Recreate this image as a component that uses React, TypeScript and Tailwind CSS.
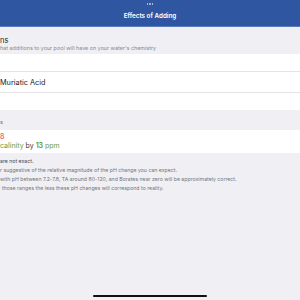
export default function App() {
  return (
    <div
      className="relative w-[300px] h-[300px] overflow-hidden bg-[#efeff4] whitespace-nowrap"
      style={{ fontFamily: "Inter, 'Noto Sans', sans-serif" }}
    >
      {/* Nav bar */}
      <div className="h-[27px] bg-[#2f57a1] border-b border-[#5b7cbc] flex flex-col items-center">
        <div className="mt-[3px] flex gap-[1px]">
          <span className="w-[1.5px] h-[1.5px] rounded-full bg-white/70" />
          <span className="w-[1.5px] h-[1.5px] rounded-full bg-white/70" />
          <span className="w-[1.5px] h-[1.5px] rounded-full bg-white/70" />
        </div>
        <div className="mt-[8px] text-[6.3px] leading-[7px] font-semibold text-white">
          Effects of Adding
        </div>
      </div>

      {/* Section header */}
      <div className="pt-[9px] pb-[2px]">
        <div className="text-[7.5px] leading-[9px] text-[#1c1c1e]">ns</div>
        <div className="text-[5.4px] leading-[7px] text-[#8a8a8e]">
          hat additions to your pool will have on your water's chemistry
        </div>
      </div>

      {/* Picker rows */}
      <div className="bg-white">
        <div className="h-[17px]" />
        <div className="h-[21px] border-t border-[#e4e4e7] flex items-center pt-[3px] text-[7.3px] text-[#1c1c1e]">
          Muriatic Acid
        </div>
        <div className="h-[18px] border-t border-[#e4e4e7]" />
      </div>

      {/* Results header */}
      <div className="pt-[8px] pb-[4px] text-[5.4px] leading-[8px] text-[#6d6d72]">s</div>

      {/* Results */}
      <div className="bg-white pt-[2px] pb-[3px] text-[7px] leading-[9px]">
        <div className="text-[#e5304d]">8</div>
        <div>
          <span className="text-[#6c9a3c]">calinity</span>
          <span className="text-[#3a3a3c]"> by </span>
          <span className="text-[#4d9838] font-semibold">13</span>
          <span className="text-[#6c9a3c]"> ppm</span>
        </div>
      </div>

      {/* Notes */}
      <div className="pt-[4px] text-[5.2px] leading-[9px] text-[#76767a]">
        <div className="text-[#48484c]">are not exact.</div>
        <div>r suggestive of the relative magnitude of the pH change you can expect.</div>
        <div>with pH between 7.2-7.8, TA around 80-120, and Borates near zero will be approximately correct.</div>
        <div className="pl-[2px]">those ranges the less these pH changes will correspond to reality.</div>
      </div>

      {/* Home indicator */}
      <div className="absolute left-[93px] top-[295px] w-[114px] h-[2px] rounded-full bg-[#111]" />
    </div>
  );
}
